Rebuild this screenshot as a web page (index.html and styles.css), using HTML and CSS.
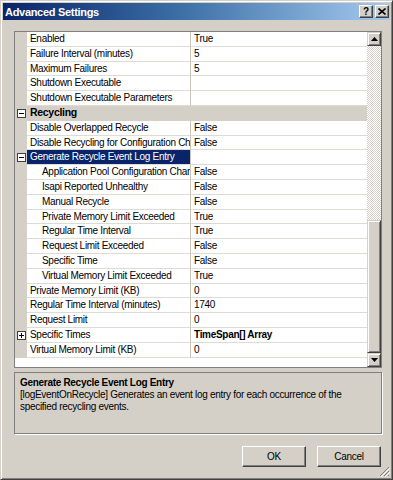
FILE: index.html
```html
<!DOCTYPE html>
<html lang="en">
<head>
    <meta charset="UTF-8">
    <meta name="viewport" content="width=device-width, initial-scale=1.0">
    <title>Advanced Settings</title>
    <link rel="stylesheet" href="styles.css">
</head>
<body>
    <div class="window">
        <div class="titlebar">
            <span class="title">Advanced Settings</span>
            <div class="caption-btns">
                <span class="cap-btn">?</span>
                <span class="cap-btn">
                    <svg width="8" height="7" viewBox="0 0 8 7"><path d="M0.5 0.5 L7.5 6.5 M7.5 0.5 L0.5 6.5" stroke="#000" stroke-width="1.6"/></svg>
                </span>
            </div>
        </div>
        <div class="content">
            <div class="propgrid">
                <div class="rows">
                    <div class="row"><span class="gut"></span><span class="name">Enabled</span><span class="val">True</span></div>
                    <div class="row"><span class="gut"></span><span class="name">Failure Interval (minutes)</span><span class="val">5</span></div>
                    <div class="row"><span class="gut"></span><span class="name">Maximum Failures</span><span class="val">5</span></div>
                    <div class="row"><span class="gut"></span><span class="name">Shutdown Executable</span><span class="val"></span></div>
                    <div class="row"><span class="gut"></span><span class="name">Shutdown Executable Parameters</span><span class="val"></span></div>
                    <div class="row cat"><span class="gut"><i class="box minus"></i></span><span class="name">Recycling</span><span class="val"></span></div>
                    <div class="row"><span class="gut"></span><span class="name">Disable Overlapped Recycle</span><span class="val">False</span></div>
                    <div class="row"><span class="gut"></span><span class="name">Disable Recycling for Configuration Ch</span><span class="val">False</span></div>
                    <div class="row sel"><span class="gut"><i class="box minus"></i></span><span class="name">Generate Recycle Event Log Entry</span><span class="val"></span></div>
                    <div class="row sub"><span class="gut"></span><span class="name">Application Pool Configuration Char</span><span class="val">False</span></div>
                    <div class="row sub"><span class="gut"></span><span class="name">Isapi Reported Unhealthy</span><span class="val">False</span></div>
                    <div class="row sub"><span class="gut"></span><span class="name">Manual Recycle</span><span class="val">False</span></div>
                    <div class="row sub"><span class="gut"></span><span class="name">Private Memory Limit Exceeded</span><span class="val">True</span></div>
                    <div class="row sub"><span class="gut"></span><span class="name">Regular Time Interval</span><span class="val">True</span></div>
                    <div class="row sub"><span class="gut"></span><span class="name">Request Limit Exceeded</span><span class="val">False</span></div>
                    <div class="row sub"><span class="gut"></span><span class="name">Specific Time</span><span class="val">False</span></div>
                    <div class="row sub"><span class="gut"></span><span class="name">Virtual Memory Limit Exceeded</span><span class="val">True</span></div>
                    <div class="row"><span class="gut"></span><span class="name">Private Memory Limit (KB)</span><span class="val">0</span></div>
                    <div class="row"><span class="gut"></span><span class="name">Regular Time Interval (minutes)</span><span class="val">1740</span></div>
                    <div class="row"><span class="gut"></span><span class="name">Request Limit</span><span class="val">0</span></div>
                    <div class="row"><span class="gut"><i class="box plus"></i></span><span class="name">Specific Times</span><span class="val strong">TimeSpan[] Array</span></div>
                    <div class="row"><span class="gut"></span><span class="name">Virtual Memory Limit (KB)</span><span class="val">0</span></div>
                </div>
                <div class="scrollbar">
                    <span class="sb-btn"><svg width="7" height="4" viewBox="0 0 7 4"><path d="M3.5 0 L7 4 L0 4 Z" fill="#000"/></svg></span>
                    <span class="sb-track"></span>
                    <span class="sb-thumb"></span>
                    <span class="sb-btn"><svg width="7" height="4" viewBox="0 0 7 4"><path d="M0 0 L7 0 L3.5 4 Z" fill="#000"/></svg></span>
                </div>
            </div>
            <div class="desc">
                <div class="desc-title">Generate Recycle Event Log Entry</div>
                <div class="desc-text">[logEventOnRecycle] Generates an event log entry for each occurrence of the specified recycling events.</div>
            </div>
            <div class="actions">
                <button type="button" class="btn">OK</button>
                <button type="button" class="btn">Cancel</button>
            </div>
        </div>
        <svg class="grip" width="11" height="11" viewBox="0 0 11 11">
            <path d="M10 1 L1 10 M10 5 L5 10 M10 9 L9 10" stroke="#808080" stroke-width="1"/>
            <path d="M11 2 L2 11 M11 6 L6 11" stroke="#fff" stroke-width="1"/>
        </svg>
    </div>
</body>
</html>
```

FILE: styles.css
```css
* {
    box-sizing: border-box;
}

body {
    margin: 0;
    background-color: #d4d0c8;
    font-family: "Liberation Sans", Arial, sans-serif;
    font-size: 10px;
    letter-spacing: -0.3px;
    color: #000;
}

:root {
    --face: #d4d0c8;
    --shadow: #808080;
    --dark: #404040;
    --navy: #0a246a;
}

.window {
    position: relative;
    width: 393px;
    height: 480px;
    display: flex;
    flex-direction: column;
    background-color: var(--face);
    border: 1px solid;
    border-color: var(--face) var(--dark) var(--dark) var(--face);
    box-shadow: inset 1px 1px #fff, inset -1px -1px var(--shadow);
    padding: 2px;
}

.titlebar {
    height: 17px;
    display: flex;
    align-items: center;
    justify-content: space-between;
    padding: 0 1px 0 2px;
    background: linear-gradient(to right, #0a246a, #3a6ea5 45%, #a6caf0);
}

.title {
    color: #fff;
    font-weight: bold;
    font-size: 11px;
}

.caption-btns {
    display: flex;
    gap: 2px;
}

.cap-btn {
    width: 14px;
    height: 13px;
    display: flex;
    align-items: center;
    justify-content: center;
    background-color: var(--face);
    border: 1px solid;
    border-color: #fff var(--dark) var(--dark) #fff;
    box-shadow: inset -1px -1px var(--shadow);
    font-weight: bold;
    font-size: 10px;
    letter-spacing: 0;
    line-height: 1;
}

.content {
    flex: 1;
    display: flex;
    flex-direction: column;
    padding: 11px 8px 0 11px;
}

.propgrid {
    height: 337px;
    display: flex;
    border: 1px solid var(--shadow);
    background-color: #fff;
}

.rows {
    flex: 1;
    overflow: hidden;
}

.row {
    display: grid;
    grid-template-columns: 12px 163px 1fr;
    height: 14.8px;
    line-height: 13.8px;
}

.row .name,
.row .val {
    border-bottom: 1px solid #dedbd4;
    white-space: nowrap;
    overflow: hidden;
    padding-left: 3px;
}

.row .val {
    border-left: 1px solid #c8c4bc;
}

.gut {
    background-color: var(--face);
    display: flex;
    align-items: center;
    justify-content: center;
}

.row.sub .name {
    padding-left: 15px;
}

.row.cat .name,
.row.cat .val {
    background-color: var(--face);
    border-color: var(--face);
    font-weight: bold;
    font-size: 10.5px;
}

.row.sel .name {
    background-color: var(--navy);
    color: #fff;
}

.val.strong {
    font-weight: bold;
}

.box {
    position: relative;
    width: 9px;
    height: 9px;
    border: 1px solid var(--dark);
    background-color: #fff;
}

.box::before {
    content: "";
    position: absolute;
    left: 1px;
    top: 3px;
    width: 5px;
    height: 1px;
    background-color: #000;
}

.box.plus::after {
    content: "";
    position: absolute;
    left: 3px;
    top: 1px;
    width: 1px;
    height: 5px;
    background-color: #000;
}

.scrollbar {
    width: 14px;
    display: flex;
    flex-direction: column;
}

.sb-btn,
.sb-thumb {
    background-color: var(--face);
    border: 1px solid;
    border-color: var(--face) var(--dark) var(--dark) var(--face);
    box-shadow: inset 1px 1px #fff, inset -1px -1px var(--shadow);
}

.sb-btn {
    height: 14px;
    display: flex;
    align-items: center;
    justify-content: center;
}

.sb-track {
    height: 174px;
    background: repeating-conic-gradient(var(--face) 0 25%, #fff 0 50%) 0 0 / 2px 2px;
}

.sb-thumb {
    flex: 1;
}

.desc {
    height: 62px;
    margin-top: 4px;
    padding: 3px 5px;
    border: 1px solid var(--shadow);
    box-shadow: 1px 1px #fff;
}

.desc-title {
    font-weight: bold;
    line-height: 13px;
}

.desc-text {
    line-height: 12px;
}

.actions {
    display: flex;
    justify-content: flex-end;
    gap: 11px;
    margin-top: 12px;
    padding-right: 1px;
}

.btn {
    width: 64px;
    height: 21px;
    padding: 0;
    background-color: var(--face);
    border: 1px solid;
    border-color: #fff var(--dark) var(--dark) #fff;
    box-shadow: inset -1px -1px var(--shadow);
    font-family: inherit;
    font-size: 10px;
    letter-spacing: -0.3px;
    color: #000;
}

.grip {
    position: absolute;
    right: 2px;
    bottom: 2px;
}
```
